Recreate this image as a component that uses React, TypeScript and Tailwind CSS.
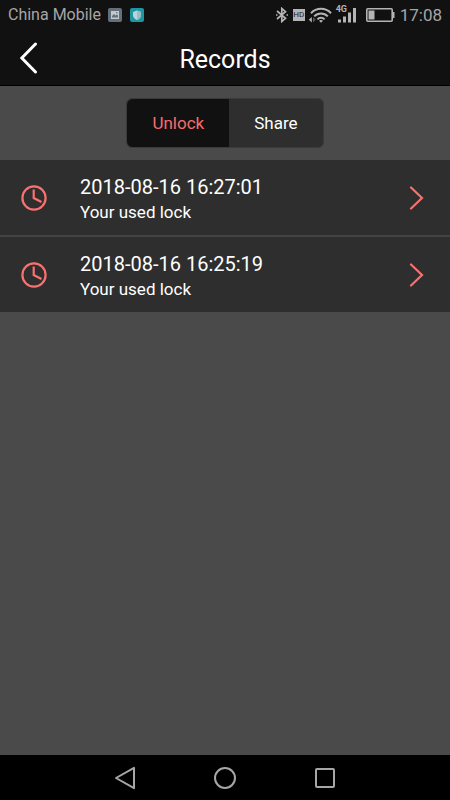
import { useState } from "react"

const tabs = [
  { id: "unlock", label: "Unlock" },
  { id: "share", label: "Share" },
]

const records = [
  { time: "2018-08-16 16:27:01", text: "Your used lock" },
  { time: "2018-08-16 16:25:19", text: "Your used lock" },
]

function StatusBar() {
  return (
    <div className="flex h-[30px] items-center justify-between px-2 text-[#a6a6a6]">
      <div className="flex items-center">
        <span className="text-base leading-6">China Mobile</span>
        <svg className="ml-[7px] h-[14px] w-[14px]" viewBox="0 0 14 14">
          <rect width="14" height="14" rx="2" fill="#63707c" />
          <path d="M3 3h8v8H3z" fill="#c3c8cc" />
          <path d="M4 9.500V8l2-2 1.500 1.500L9 6.500l1 1v2z" fill="#63707c" />
          <circle cx="8.800" cy="4.700" r="0.800" fill="#63707c" />
        </svg>
        <svg className="ml-2 h-[14px] w-[14px]" viewBox="0 0 14 14">
          <rect width="14" height="14" rx="2" fill="#1f95a3" />
          <path d="M7 2.500 11 4v3.200c0 2.200-1.600 3.800-4 4.800-2.400-1-4-2.600-4-4.800V4z" fill="#b9d5d8" />
          <path d="M7 2.500 11 4v3.200c0 2.200-1.600 3.800-4 4.800z" fill="#93bfc5" />
        </svg>
      </div>

      <div className="flex items-center">
        <svg className="h-4 w-[14px]" viewBox="0 0 14 16" fill="none" stroke="#b4b4b4" strokeWidth="1.700">
          <path d="M2 4 10.500 11.300 6.800 14.500V1.500L10.500 4.700 2 12" />
          <path d="M1 8h1.500M11.500 8H13" />
        </svg>
        <span className="ml-1 flex h-3 w-3 items-center justify-center bg-[#b4b4b4] text-[8px] leading-3 text-[#222222]">
          HD
        </span>
        <svg className="ml-[3px] h-4 w-6" viewBox="0 0 24 16" fill="none" stroke="#b4b4b4" strokeWidth="2">
          <path d="M3 6.200C8.500.4 17.500.4 23 6.200M6.200 9.400c3.800-4 9.800-4 13.600 0M9.400 12.400c2-2.200 5.200-2.200 7.200 0" />
          <path d="M11 13.700Q13 12.300 15 13.700L13 15.800z" fill="#b4b4b4" stroke="none" />
          <path d="M3.800 10v5.500L0.800 12.800z" fill="#b4b4b4" stroke="none" />
          <path d="M5 10v5.500L7.800 12.800z" fill="#555555" stroke="none" />
        </svg>
        <div className="relative ml-1 h-5 w-[21px]">
          <span className="absolute top-0 left-0 text-[9px] leading-[9px] font-bold text-[#b4b4b4]">4G</span>
          <svg className="h-5 w-[21px]" viewBox="0 0 21 20" fill="#b4b4b4">
            <path d="M2 14.500h3V17.500H2zM7 11.500h3V17.500H7zM12 7.500h3V17.500h-3zM17 3h3v14.500h-3z" />
          </svg>
        </div>
        <svg className="ml-[9px] h-[14px] w-[29px]" viewBox="0 0 29 14">
          <rect x="0.800" y="0.800" width="25.400" height="12.400" rx="1" fill="none" stroke="#b4b4b4" strokeWidth="1.600" />
          <path d="M2.500 2.500H8.500v9H2.500z" fill="#b4b4b4" />
          <path d="M26.500 4H28.500v6h-2z" fill="#b4b4b4" />
        </svg>
        <span className="ml-[5px] text-[17px] leading-6">17:08</span>
      </div>
    </div>
  )
}

function ClockIcon() {
  return (
    <svg className="h-[26px] w-[26px]" viewBox="0 0 26 26" fill="none" stroke="#f97171" strokeWidth="2.200">
      <circle cx="13" cy="13" r="11.600" />
      <path d="M12.700 4.500V13L20.500 17" />
    </svg>
  )
}

export default function App() {
  const [activeTab, setActiveTab] = useState("unlock")

  return (
    <div className="flex min-h-screen flex-col bg-[#4a4a4a] font-[Roboto,sans-serif] text-white">
      <div className="border-b border-black bg-[#111111]">
        <StatusBar />
        <header className="grid h-[55px] grid-cols-[1fr_auto_1fr] items-center px-5">
          <button aria-label="Back" className="w-5">
            <svg className="h-8 w-[18px]" viewBox="0 0 18 32" fill="none" stroke="#ffffff" strokeWidth="3">
              <path d="M15.500 2 1.800 16 15.500 30" strokeLinecap="round" />
            </svg>
          </button>
          <h1 className="pt-1 text-[25px] leading-8">Records</h1>
        </header>
      </div>

      <main className="flex-1">
        <div className="flex justify-center py-3">
          <div className="flex rounded-md border border-[#3a3a3a] bg-[#2e2e2e]">
            {tabs.map((tab) => (
              <button
                key={tab.id}
                onClick={() => setActiveTab(tab.id)}
                className={`h-12 px-[25px] pt-[2px] text-[17px] first:rounded-l-md last:rounded-r-md ${
                  activeTab === tab.id ? "bg-[#111111] text-[#f76d6d]" : "text-white"
                }`}
              >
                {tab.label}
              </button>
            ))}
          </div>
        </div>

        <ul className="divide-y-2 divide-[#434343] bg-[#2e2e2e]">
          {records.map((record) => (
            <li key={record.time}>
              <button className="flex h-[75px] w-full items-center pr-[26px] pl-[21px] text-left">
                <ClockIcon />
                <span className="ml-[33px] flex flex-1 flex-col pt-[3px]">
                  <span className="text-xl leading-[26px]">{record.time}</span>
                  <span className="text-[17px] leading-6">{record.text}</span>
                </span>
                <svg className="h-6 w-[15px]" viewBox="0 0 15 24" fill="none" stroke="#f97171" strokeWidth="2.200">
                  <path d="M2 1.500 13 12 2 22.500" strokeLinecap="round" />
                </svg>
              </button>
            </li>
          ))}
        </ul>
      </main>

      <nav className="flex h-[45px] items-center justify-center gap-[76px] bg-black">
        <button aria-label="Back">
          <svg className="h-6 w-6" viewBox="0 0 24 24" fill="none" stroke="#a6a6a6" strokeWidth="2">
            <path d="M21 1.800v20.400L3 12z" strokeLinejoin="round" />
          </svg>
        </button>
        <button aria-label="Home">
          <svg className="h-6 w-6" viewBox="0 0 24 24" fill="none" stroke="#a6a6a6" strokeWidth="2">
            <circle cx="12" cy="12" r="10" />
          </svg>
        </button>
        <button aria-label="Recent apps">
          <svg className="h-6 w-6" viewBox="0 0 24 24" fill="none" stroke="#a6a6a6" strokeWidth="2">
            <rect x="3" y="3" width="18" height="18" rx="1" />
          </svg>
        </button>
      </nav>
    </div>
  )
}
